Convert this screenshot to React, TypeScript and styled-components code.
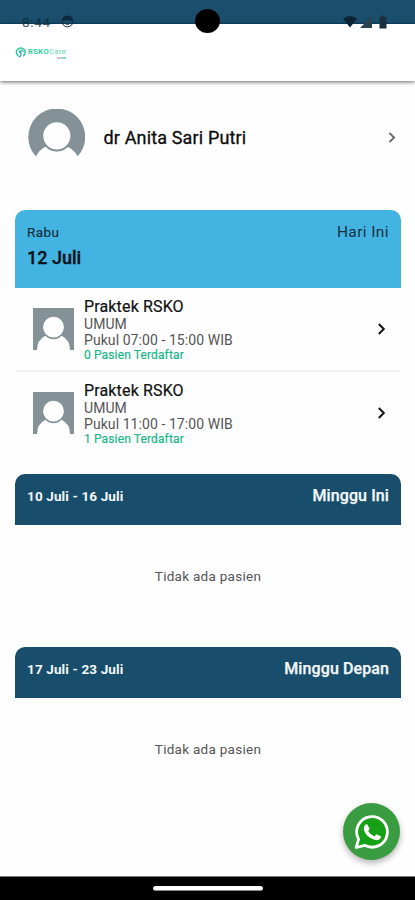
import React from 'react';
import styled, { createGlobalStyle } from 'styled-components';

const GlobalStyle = createGlobalStyle`
  * { box-sizing: border-box; }
  body { margin: 0; background: #fefefe; font-family: Roboto, "Liberation Sans", sans-serif; }
`;

const Screen = styled.div`
  position: relative;
  width: 415px;
  height: 900px;
  overflow: hidden;
  display: flex;
  flex-direction: column;
  background: #fefefe;
`;

const StatusStrip = styled.div`
  flex: none;
  height: 24px;
  background: #194f6d;
  border-bottom: 1px solid #0f4564;
`;

const StatusOverlay = styled.div`
  position: absolute;
  inset: 9px 0 auto 0;
  height: 25px;
  padding: 0 27px 0 22px;
  display: flex;
  align-items: center;
  justify-content: space-between;
  color: #10293a;
`;

const StatusGroup = styled.div<{ $gap: number }>`
  display: flex;
  align-items: center;
  gap: ${(p) => p.$gap}px;
  svg { display: block; }
`;

const Clock = styled.span`
  width: 28px;
  font-size: 13.5px;
  line-height: 16px;
  letter-spacing: 0.7px;
  opacity: 0.8;
  white-space: nowrap;
`;

const Camera = styled.div`
  position: absolute;
  left: 195px;
  top: 9px;
  width: 25px;
  height: 24px;
  border-radius: 50%;
  background: #000;
`;

const AppBar = styled.header`
  flex: none;
  height: 57px;
  padding: 21px 15px 0;
  background: #fff;
  box-shadow: 0 1px 4px rgba(0, 0, 0, 0.6);
`;

const Brand = styled.div`
  display: flex;
  align-items: flex-start;
  gap: 2px;
`;

const Wordmark = styled.div`
  display: flex;
  flex-direction: column;
  padding-top: 3px;
  font-size: 7.5px;
  line-height: 8px;
  font-weight: 700;
  letter-spacing: 0.45px;
  color: #2fcf9f;
  white-space: nowrap;
  span { font-weight: 400; color: #62d9b8; }
`;

const Tagline = styled.i`
  align-self: flex-end;
  width: 9px;
  height: 2px;
  margin-top: 1px;
  background: linear-gradient(90deg, #c9a5b0 60%, #45d79f 60%);
  opacity: 0.7;
`;

const Profile = styled.section`
  flex: none;
  height: 129px;
  padding: 0 17px 16px 28px;
  display: flex;
  align-items: center;
`;

const Name = styled.h1`
  flex: 1;
  margin: 1px 0 0 18.5px;
  font-size: 18px;
  line-height: 24px;
  font-weight: 400;
  letter-spacing: 0.15px;
  color: #0c0c0c;
  -webkit-text-stroke: 0.3px #0c0c0c;
`;

const Card = styled.section<{ $height: number }>`
  flex: none;
  height: ${(p) => p.$height}px;
  margin: 0 14px 0 15px;
  display: flex;
  flex-direction: column;
`;

const CardHead = styled.header<{ $today?: boolean }>`
  flex: none;
  height: ${(p) => (p.$today ? 78 : 51)}px;
  padding: 12px 12px 0;
  display: flex;
  align-items: flex-start;
  justify-content: space-between;
  border-radius: 10px 10px 0 0;
  background: ${(p) => (p.$today ? '#43b4e2' : '#184e6c')};
  color: ${(p) => (p.$today ? '#17323f' : '#f4f8fa')};
`;

const Weekday = styled.div`
  font-size: 13.5px;
  line-height: 20px;
  letter-spacing: 0.4px;
  -webkit-text-stroke: 0.2px #17323f;
`;

const BigDate = styled.div`
  margin-top: 5px;
  font-size: 18px;
  line-height: 22px;
  font-weight: 500;
  color: #061117;
  -webkit-text-stroke: 0.3px #061117;
`;

const Range = styled.div`
  font-size: 13.5px;
  line-height: 20px;
  font-weight: 700;
  letter-spacing: 0.13px;
`;

const Period = styled.div<{ $strong?: boolean }>`
  font-size: ${(p) => (p.$strong ? 16 : 15.5)}px;
  line-height: 20px;
  font-weight: ${(p) => (p.$strong ? 500 : 400)};
  letter-spacing: ${(p) => (p.$strong ? 0.1 : 0.4)}px;
  -webkit-text-stroke: ${(p) => (p.$strong ? 0.25 : 0)}px currentColor;
`;

const Row = styled.article`
  flex: none;
  height: 84px;
  padding: 0 13px 2px 18px;
  display: flex;
  align-items: center;
  & + & { border-top: 2px solid #f1f1f1; margin-top: -2px; height: 86px; }
`;

const RowText = styled.div`
  flex: 1;
  margin-left: 10px;
  display: flex;
  flex-direction: column;
  padding-top: 1px;
`;

const Title = styled.div`
  margin-bottom: -1px;
  font-size: 16px;
  line-height: 20px;
  letter-spacing: 0.15px;
  color: #111;
  -webkit-text-stroke: 0.2px #111;
`;

const Detail = styled.div`
  font-size: 14px;
  line-height: 16px;
  letter-spacing: 0.07px;
  color: #555;
`;

const Registered = styled.div`
  font-size: 12px;
  line-height: 14px;
  letter-spacing: 0.13px;
  color: #19b78a;
  -webkit-text-stroke: 0.2px #19b78a;
`;

const Empty = styled.p`
  flex: 1;
  margin: 0;
  padding-top: 41px;
  text-align: center;
  font-size: 13.5px;
  line-height: 20px;
  letter-spacing: 0.28px;
  color: #555;
`;

const Fab = styled.button`
  position: absolute;
  left: 343px;
  top: 803px;
  width: 57px;
  height: 57px;
  padding: 0;
  border: 0;
  border-radius: 50%;
  display: grid;
  place-items: center;
  background: #3a9c40;
  box-shadow: 0 3px 6px rgba(0, 0, 0, 0.3);
`;

const NavBar = styled.footer`
  flex: none;
  height: 24px;
  margin-top: auto;
  display: flex;
  justify-content: center;
  padding-top: 9px;
  background: #000;
  border-top: 1px solid #777;
`;

const HomeHandle = styled.div`
  width: 110px;
  height: 5px;
  border-radius: 3px;
  background: #fff;
  border-bottom: 1px solid #888;
`;

const ProfileAvatar = () => (
  <svg width="57" height="57" viewBox="0 0 57 57">
    <path d="M8 47.5A28.5 28.5 0 1 1 49.5 47.5Q46 41 40 38H17Q11 41 8 47.5Z" fill="#849297" />
    <path d="M8 48Q11 42 16 39Q28.5 48 41 39Q47 42 50 48V57H8Z" fill="#fefefe" />
    <circle cx="28.8" cy="27.7" r="14.9" fill="#849297" />
    <circle cx="28.8" cy="26.8" r="13.6" fill="#fefefe" />
  </svg>
);

const SquareAvatar = () => (
  <svg width="41" height="42" viewBox="0 0 41 42">
    <path d="M0 0H41V42H0Z" fill="#849297" />
    <path d="M4 42Q4 32 12 28H29Q37 32 37 42Z" fill="#fefefe" />
    <circle cx="20.5" cy="20.2" r="11" fill="#849297" />
    <circle cx="20.5" cy="19.2" r="10.4" fill="#fefefe" />
  </svg>
);

const Chevron = ({ color, size }: { color: string; size: number }) => (
  <svg width={size} height={size} viewBox="0 0 14 14" fill="none" stroke={color} strokeWidth="2">
    <path d="M4.8 2L9.8 7L4.8 12" />
  </svg>
);

const BrandMark = () => (
  <svg width="11" height="14" viewBox="0 0 11 14" fill="none">
    <path d="M3.4 11A4.4 4.4 0 1 1 8.2 11" stroke="#2acb9d" strokeWidth="1.5" />
    <path d="M3.8 7.5L5.8 5.6V10.4Q5.5 12 3.5 12" stroke="#2a9eb4" strokeWidth="1.2" />
    <path d="M5.7 5.5Q8 4.7 8.3 7" stroke="#35d0a0" strokeWidth="1.1" />
  </svg>
);

const FaceIcon = () => (
  <svg width="13" height="13" viewBox="0 0 13 13">
    <circle cx="6.5" cy="6.5" r="5.4" fill="none" stroke="currentColor" strokeWidth="1" />
    <path d="M1 5Q2 0.5 6.5 0.7Q11 0.5 12 5L9.5 6L7.5 4.4L6.5 6L5.5 4.4L3.5 6Z" fill="currentColor" />
    <path d="M4.5 9Q6.5 10.5 8.5 9" stroke="currentColor" fill="none" strokeWidth=".8" />
  </svg>
);

const SignalIcons = () => (
  <svg width="45" height="14" viewBox="0 0 45 14">
    <path d="M0 3.6Q7 -1.6 14 3.6L7 12.5Z" fill="#0b2433" />
    <path d="M29 1V13H17Z" fill="#284452" />
    <path d="M38.5 0.5H41.5V2H43.5V13.5H36.5V2H38.5Z" fill="#1b303c" />
  </svg>
);

const WhatsAppIcon = () => (
  <svg width="36" height="36" viewBox="0 0 36 36">
    <path d="M2.2 33.5L4.6 25.2A15.3 15.3 0 1 1 10.7 31.3Z" fill="#16a015" stroke="#fff" strokeWidth="2.8" strokeLinejoin="round" />
    <path
      d="M10.2 12.2Q11.3 9.8 13.3 10.5L15.5 14.6Q15.7 15.6 14.1 17.1Q16.2 21 20.4 22.4L22.4 20.2L26.8 22.3Q27.3 23 26.4 24.6Q24.4 27 20.6 25.8Q12.4 23.3 10 16.2Q9.6 13.8 10.2 12.2Z"
      fill="#fff"
    />
  </svg>
);

const visits = [
  { hours: 'Pukul 07:00 - 15:00 WIB', registered: '0 Pasien Terdaftar' },
  { hours: 'Pukul 11:00 - 17:00 WIB', registered: '1 Pasien Terdaftar' },
];

const weeks = [
  { range: '10 Juli - 16 Juli', period: 'Minggu Ini', height: 173 },
  { range: '17 Juli - 23 Juli', period: 'Minggu Depan', height: 173 },
];

export default function App() {
  return (
    <>
      <GlobalStyle />
      <Screen>
        <StatusStrip />
        <AppBar>
          <Brand>
            <BrandMark />
            <Wordmark>
              <div>RSKO<span>Care</span></div>
              <Tagline />
            </Wordmark>
          </Brand>
        </AppBar>
        <Profile>
          <ProfileAvatar />
          <Name>dr Anita Sari Putri</Name>
          <Chevron color="#666" size={13} />
        </Profile>
        <Card $height={264}>
          <CardHead $today>
            <div>
              <Weekday>Rabu</Weekday>
              <BigDate>12 Juli</BigDate>
            </div>
            <Period>Hari Ini</Period>
          </CardHead>
          {visits.map((v) => (
            <Row key={v.hours}>
              <SquareAvatar />
              <RowText>
                <Title>Praktek RSKO</Title>
                <Detail>UMUM</Detail>
                <Detail>{v.hours}</Detail>
                <Registered>{v.registered}</Registered>
              </RowText>
              <Chevron color="#151515" size={14} />
            </Row>
          ))}
        </Card>
        {weeks.map((w) => (
          <Card key={w.range} $height={w.height}>
            <CardHead>
              <Range>{w.range}</Range>
              <Period $strong>{w.period}</Period>
            </CardHead>
            <Empty>Tidak ada pasien</Empty>
          </Card>
        ))}
        <NavBar>
          <HomeHandle />
        </NavBar>
        <StatusOverlay>
          <StatusGroup $gap={11}>
            <Clock>8:44</Clock>
            <FaceIcon />
          </StatusGroup>
          <SignalIcons />
        </StatusOverlay>
        <Camera />
        <Fab aria-label="WhatsApp">
          <WhatsAppIcon />
        </Fab>
      </Screen>
    </>
  );
}
